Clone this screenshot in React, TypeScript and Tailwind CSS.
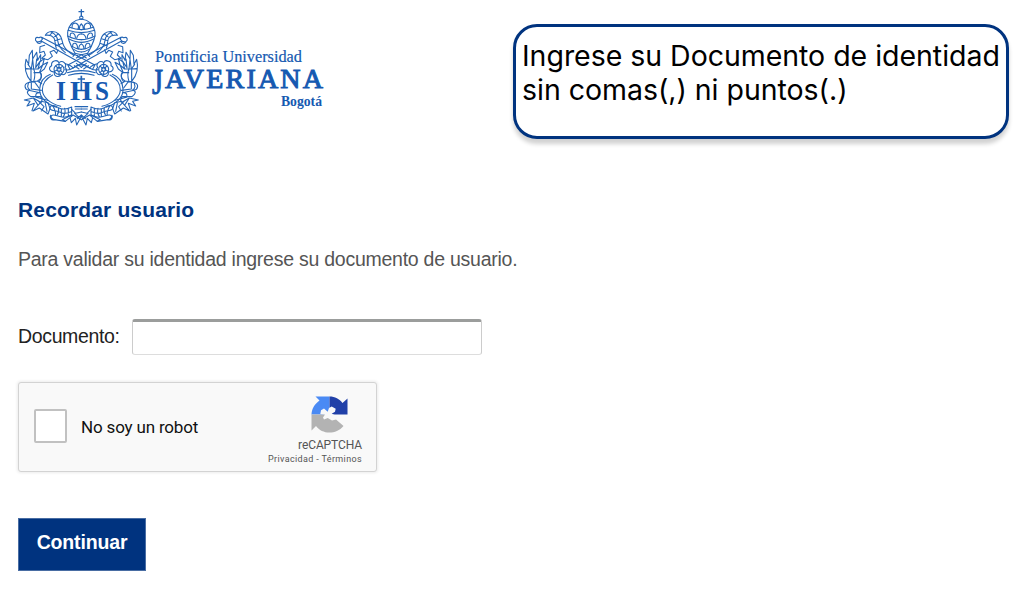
function HalfEmblem() {
  return (
    <g>
      {/* tiara */}
      <path d="M199 57C176 60 162 74 158 96C155 113 167 137 180 160L199 164" />
      <path d="M163 82Q182 89 199 89M159 91Q181 98 199 98M158 108Q180 119 199 119M162 117Q182 127 199 127M171 139Q184 148 199 148M176 148Q188 156 199 156" />
      <path d="M171 83Q171 67 183 70Q194 75 189 88M193 88Q193 76 199 72M166 108Q164 98 173 99Q182 103 181 114M185 115Q188 101 199 102M173 140Q172 128 181 130Q189 135 187 146M191 147Q192 134 199 132" />
      {/* key shaft, bow and bit */}
      <path d="M72 113C61 109 58 119 65 125C69 133 78 132 80 124L224 204M80 112L238 194M72 113Q80 108 82 118M65 125Q76 128 82 118" />
      <path d="M89 136L75 140L74 158L87 154L91 165L80 175L99 179L112 169L105 156L117 151L125 160L129 149" />
      {/* infula ribbon */}
      <path d="M91 106C98 92 119 91 131 102C143 111 139 125 147 139C153 151 166 160 177 166M91 106Q108 103 116 113C123 121 118 132 124 145M109 97Q126 104 128 122Q131 143 151 158M105 105L112 97M119 110L130 102M119 122L136 117M123 137L143 130" />
      <path d="M181 160L174 169M199 164L184 174M187 166L192 172" />
      {/* rosette */}
      <circle cx="132" cy="208" r="15" />
      <circle cx="132" cy="208" r="6" />
      <path d="M119 215C104 218 98 202 110 197C107 183 126 177 132 188C143 179 157 192 150 202C161 213 150 228 139 223C132 235 113 229 119 215M122 198L130 205M142 199L134 206M119 213L129 210M143 218L136 211M132 190V202M132 215V225" />
      {/* oval frame */}
      <path d="M157 218Q177 212 199 212M161 226Q180 220 199 220M113 225C92 236 82 251 82 270C83 292 105 310 137 319M106 223C83 232 75 249 74 267C72 294 99 314 125 322M180 320H199M181 327H199" />
      <path d="M151 191Q168 195 174 204Q163 212 150 209M174 204Q184 196 199 194M158 194L165 208M178 197L192 207M184 190L199 202" />
      {/* palm leaves */}
      <path d="M48 244C31 224 28 198 33 178L41 193L43 166L52 151L53 177L65 157L68 181L77 164L77 184L88 175L83 195L98 187L88 207L75 217M39 193L49 207L53 178L56 207M65 177L62 203L75 184L69 207L83 195L74 216M33 206L48 207V244M56 207Q63 221 56 245M75 217Q84 232 73 244M48 207H70M48 244L57 246" />
      {/* side scroll */}
      <path d="M57 218H76C83 225 78 240 67 243L39 248C26 252 28 268 41 271L75 278M43 246Q32 261 45 270M49 247V267L79 271M67 243L80 251M58 245L72 264M44 271Q29 276 47 290L76 290M75 278Q59 277 63 292L98 301M76 290Q84 295 79 307" />
      {/* lower leaves and banner */}
      <path d="M28 300L55 294L77 307L54 333L73 324L99 342L105 326L99 308L78 304M28 300L45 304L36 318L58 310L51 332M55 294L68 314M71 304L87 320L79 333M91 310L96 334" />
      <path d="M105 326C104 313 119 315 130 323C144 330 162 325 170 321V345C151 356 136 351 121 346C105 341 104 356 119 359L151 364M105 326C109 334 128 330 136 337C148 345 161 338 170 334M114 318Q124 338 121 346M119 359C108 363 104 351 107 346M130 323Q133 336 127 344M149 325Q153 336 145 350M139 327V348M160 324V347" />
      <path d="M151 364L165 353L169 368L181 355L185 375L199 349M151 364L142 359L170 345M165 353L174 345L199 359M179 340L192 352M170 328L182 340L199 336M187 356L199 345" />
    </g>
  );
}

function Logo() {
  return (
    <svg
      className="block h-[135px] w-[340px]"
      viewBox="0 0 340 135"
      role="img"
      aria-label="Pontificia Universidad Javeriana Bogotá"
    >
      <g transform="translate(15 0) scale(.33333)" fill="none" stroke="#2465b5" strokeWidth="3.3" strokeLinejoin="round" strokeLinecap="round">
        <HalfEmblem />
        <g transform="translate(398 0) scale(-1 1)">
          <HalfEmblem />
        </g>
        <path d="M199 29V49M192 35H206" strokeWidth="4" />
        <circle cx="199" cy="53" r="5" />
        <path d="M199 227V270M188 237H210" strokeWidth="5" strokeLinecap="butt" />
      </g>
      <g fill="#1559b1" fontFamily="'Liberation Serif', serif">
        <g fontSize="26.5" fontWeight="700">
          <text x="56" y="100" textLength="10" lengthAdjust="spacingAndGlyphs">I</text>
          <text x="70" y="100" textLength="22" lengthAdjust="spacingAndGlyphs">H</text>
          <text x="95" y="100" textLength="14" lengthAdjust="spacingAndGlyphs">S</text>
        </g>
        <text x="155" y="62" fontSize="17" textLength="147" lengthAdjust="spacingAndGlyphs" stroke="#1559b1" strokeWidth=".2">Pontificia Universidad</text>
        <g stroke="#1559b1" strokeWidth="1">
          <text x="152" y="94" fontSize="36" textLength="11" lengthAdjust="spacingAndGlyphs">J</text>
          <text x="165" y="88" fontSize="28" textLength="158" lengthAdjust="spacing">AVERIANA</text>
        </g>
        <text x="281" y="106" fontSize="14" fontWeight="700" textLength="41" lengthAdjust="spacingAndGlyphs">Bogotá</text>
      </g>
    </svg>
  );
}

function RecaptchaMark() {
  return (
    <svg className="mr-[14px] h-[37px] w-[37px]" viewBox="0 0 37 37" aria-hidden="true">
      <path fill="#4a8af4" d="M18.500.5H4.500L8.500 4.500C3.500 8 .7 13 .5 18.500H18.500Z" />
      <path fill="#2140a8" d="M18.500.5C24 .5 28.500 3 31.500 7L36.500 2.500V18.500H18.500Z" />
      <path fill="#b3b3b3" d="M.5 18.500H21L25 23.500L32.500 30C25 39 11 38.500 5 30L.5 34.500Z" />
      <path fill="#f9f9f9" d="M9.300 18L10 14.300L13 12.500L16.700 15.700L18 12L20.700 10.400L24.700 12.700L24 15.700L20.700 17.700L26 20L25 23.500L21 24.500L16.700 22L13 23.500L12 21.500L14 18.500Z" />
    </svg>
  );
}

export default function App() {
  return (
    <main className="h-[594px] w-[1027px] overflow-hidden bg-white font-['Liberation_Sans',sans-serif]">
      <header className="flex h-[190px] items-start">
        <Logo />
        <aside className="mt-6 ml-[173px] h-[115px] w-[496px] rounded-[24px] border-[3px] border-[#00337f] bg-white pt-[12px] pl-[6px] font-['Inter',sans-serif] text-[28.5px] leading-[34px] tracking-[-0.03px] whitespace-nowrap text-black shadow-[0_5px_4px_rgba(0,0,0,0.18)]">
          <p>Ingrese su Documento de identidad</p>
          <p>sin comas(,) ni puntos(.)</p>
        </aside>
      </header>
      <section className="flex flex-col items-start pl-[18px]">
        <h1 className="mt-[7px] h-[26px] text-[21px] leading-[26px] font-bold tracking-[0.15px] text-[#00337f]">Recordar usuario</h1>
        <p className="mt-[23px] h-[26px] text-[19.5px] leading-[27px] tracking-[-0.25px] text-[#555]">Para validar su identidad ingrese su documento de usuario.</p>
        <div className="mt-[47px] flex h-9 items-center">
          <label htmlFor="documento" className="w-[114px] text-[19.5px] tracking-[-0.35px] text-[#222]">Documento:</label>
          <input id="documento" className="h-9 w-[350px] rounded-[3px] border-x border-t-[3px] border-b border-x-[#ccc] border-t-[#9b9d9c] border-b-[#ddd] bg-white px-2 outline-none" />
        </div>
        <div className="mt-[27px] flex h-[90px] w-[359px] rounded-[3px] border border-[#d3d3d3] bg-[#f9f9f9] font-['Roboto',sans-serif] shadow-[0_0_3px_1px_rgba(0,0,0,0.08)]">
          <div className="mt-[26px] ml-[15px] h-[34px] w-[33px] rounded-[2px] border-2 border-[#c1c1c1] bg-white" />
          <span className="mt-[32px] ml-[14px] w-[160px] text-[17px] leading-[24px] tracking-[-0.17px] text-[#111]">No soy un robot</span>
          <div className="mt-[13px] flex w-[121px] flex-col items-end text-[#555]">
            <RecaptchaMark />
            <span className="mt-[5px] text-[12px] leading-[14px] tracking-[-0.1px]">reCAPTCHA</span>
            <span className="mt-px text-[9px] leading-[12px] tracking-[0.36px]">Privacidad - Términos</span>
          </div>
        </div>
        <button className="mt-[46px] h-[53px] w-[128px] border border-[#496da3] bg-[#00337f] pb-[3px] text-[19.5px] font-bold tracking-[-0.15px] text-white">Continuar</button>
      </section>
    </main>
  );
}
